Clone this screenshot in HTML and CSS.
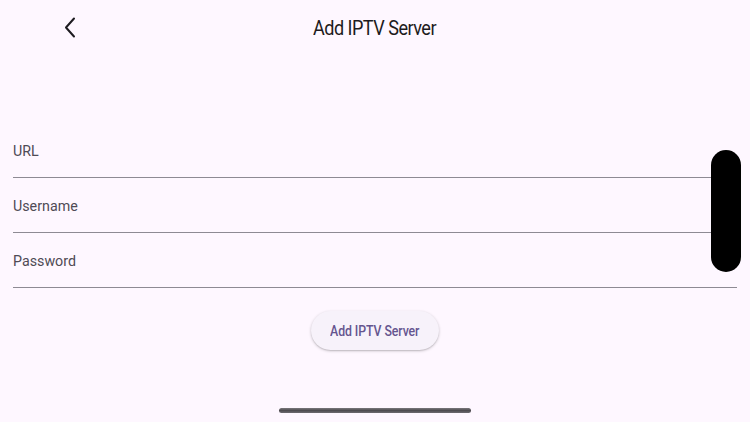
FILE: index.html
```html
<!DOCTYPE html>
<html lang="en">
<head>
  <meta charset="UTF-8">
  <meta name="viewport" content="width=device-width, initial-scale=1.0">
  <title>Add IPTV Server</title>
  <link rel="stylesheet" href="styles.css">
</head>
<body>
  <div class="header">
    <button class="back" aria-label="Back">
      <svg width="12" height="21" viewBox="0 0 12 21">
        <path d="M10 1.5 L2 10.5 L10 19.5" fill="none" stroke="#1d1b20" stroke-width="2" stroke-linecap="round" stroke-linejoin="round"/>
      </svg>
    </button>
    <h1 class="title">Add IPTV Server</h1>
  </div>

  <form class="form">
    <label class="field"><span class="label">URL</span></label>
    <label class="field"><span class="label">Username</span></label>
    <label class="field"><span class="label">Password</span></label>
    <div class="actions">
      <button type="button" class="submit"><span>Add IPTV Server</span></button>
    </div>
  </form>

  <div class="scroll-thumb"></div>
  <div class="home-bar"></div>
</body>
</html>
```

FILE: styles.css
```css
* {
  box-sizing: border-box;
  padding: 0;
  margin: 0;
}
html, body {
  height: 100%;
}
body {
  position: relative;
  background: #fef7ff;
  color: #1d1b20;
  font-family: Roboto, 'Noto Sans', sans-serif;
  overflow: hidden;
}

.header {
  position: relative;
  display: flex;
  align-items: center;
  justify-content: center;
  height: 56px;
}
.back {
  position: absolute;
  left: 64px;
  top: 17px;
  border: none;
  background: none;
  display: flex;
}
.title {
  font-size: 21px;
  font-weight: 400;
  letter-spacing: -0.6px;
  color: #1d1b20;
  transform: scaleX(0.86);
}

.form {
  padding: 67px 13px 0;
}
.field {
  display: block;
  padding: 16px 0 14px;
  border-bottom: 1px solid #8e8a94;
}
.label {
  display: block;
  font-size: 15.5px;
  line-height: 24px;
  color: #4f4b55;
  letter-spacing: 0;
  transform: scaleX(0.92);
  transform-origin: left center;
}

.actions {
  display: flex;
  justify-content: center;
  padding-top: 23px;
}
.submit {
  display: flex;
  align-items: center;
  justify-content: center;
  height: 39px;
  width: 128px;
  border: none;
  border-radius: 20px;
  background: #f7f2fa;
  box-shadow: 0 1px 3px rgba(0, 0, 0, 0.22), 0 1px 1px rgba(0, 0, 0, 0.08);
  color: #65558f;
  font-family: Roboto, sans-serif;
  font-size: 14px;
  font-weight: 500;
  letter-spacing: -0.1px;
}
.submit span {
  display: inline-block;
  white-space: nowrap;
  transform: scaleX(0.88);
}

.scroll-thumb {
  position: absolute;
  left: 711px;
  top: 150px;
  width: 30px;
  height: 122px;
  border-radius: 15px;
  background: #000;
}
.home-bar {
  position: absolute;
  left: 279px;
  top: 408px;
  width: 192px;
  height: 5px;
  border-radius: 3px;
  background: linear-gradient(#7a787c, #4e4c50 50%, #6d6b70);
}
```
